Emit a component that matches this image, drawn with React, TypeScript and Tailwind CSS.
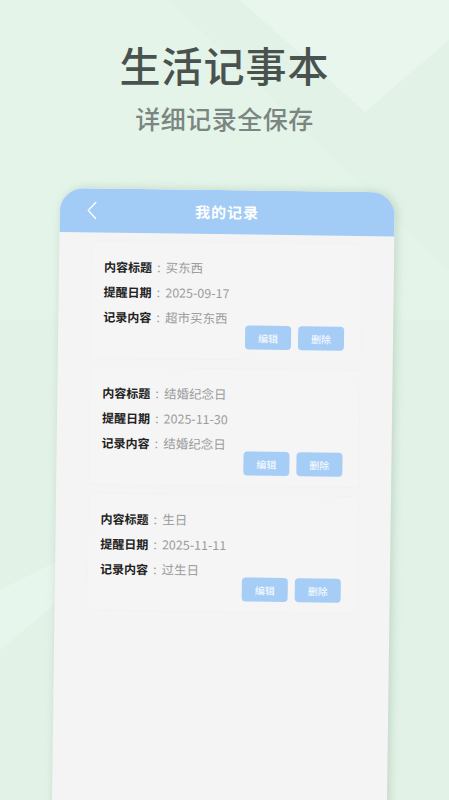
import React from "react";

const records = [
  { title: "买东西", date: "2025-09-17", content: "超市买东西" },
  { title: "结婚纪念日", date: "2025-11-30", content: "结婚纪念日" },
  { title: "生日", date: "2025-11-11", content: "过生日" },
];

function Row({ label, value }: { label: string; value: string }) {
  return (
    <div className="flex items-center h-[25px] leading-[25px]">
      <span className="font-bold text-[12px] text-[#222222]">{label}</span>
      <span className="text-[#9c9c9c] text-[13px] ml-[5px] mr-[5px]">:</span>
      <span className="text-[#9c9c9c] text-[12.5px]">{value}</span>
    </div>
  );
}

export default function App() {
  return (
    <div
      className="relative w-[449px] h-[800px] overflow-hidden bg-[#e2f2e7]"
      style={{ fontFamily: '"Noto Sans CJK SC", "Noto Sans", sans-serif' }}
    >
      <svg className="absolute inset-0" width="449" height="800" viewBox="0 0 449 800">
        <polygon points="0,0 240,0 365,112 449,40 449,0" fill="#e8f6ed" />
        <polygon points="0,0 170,0 449,270 449,320 0,320" fill="#e6f5eb" opacity="0.5" />
        <polygon points="0,590 0,650 60,600 60,560" fill="#e7f6ed" />
      </svg>

      <div className="relative flex flex-col items-center pt-[36px]">
        <h1 className="text-[41px] leading-[56px] font-medium text-[#4a524f] tracking-[1px]">生活记事本</h1>
        <p className="mt-[10px] text-[25px] leading-[32px] font-medium text-[#7b8581] tracking-[0.5px]">详细记录全保存</p>
      </div>

      <div className="absolute left-[60px] top-[188px] w-[335px] h-[660px] origin-top-left rotate-[0.75deg] rounded-t-[24px] overflow-hidden bg-[#f4f4f4] shadow-[2px_0_10px_rgba(120,160,130,0.35)]">
        <div className="relative h-[44px] bg-[#a2cbf6] flex items-center justify-center">
          <svg className="absolute left-[26px] top-[12px]" width="12" height="20" viewBox="0 0 12 20" fill="none">
            <path d="M10 2 L2.5 10 L10 18" stroke="#ffffff" strokeWidth="1.4" strokeLinecap="round" strokeLinejoin="round" />
          </svg>
          <span className="text-white text-[15px] font-bold tracking-[1px]">我的记录</span>
        </div>
        <div className="flex flex-col gap-[8px] px-[32px] pt-[8px]">
          {records.map((r) => (
            <div key={r.date} className="bg-[#f5f5f5] border border-[#f2f2f2] pl-[12px] pr-[16px] pt-[12px] pb-[10px]">
              <Row label="内容标题" value={r.title} />
              <Row label="提醒日期" value={r.date} />
              <Row label="记录内容" value={r.content} />
              <div className="flex justify-end gap-[7px] -mt-[5px]">
                <button className="w-[46px] h-[24px] rounded-[4px] bg-[#a6cdf6] text-white text-[10px]">编辑</button>
                <button className="w-[46px] h-[24px] rounded-[4px] bg-[#a6cdf6] text-white text-[10px]">删除</button>
              </div>
            </div>
          ))}
        </div>
      </div>
    </div>
  );
}
